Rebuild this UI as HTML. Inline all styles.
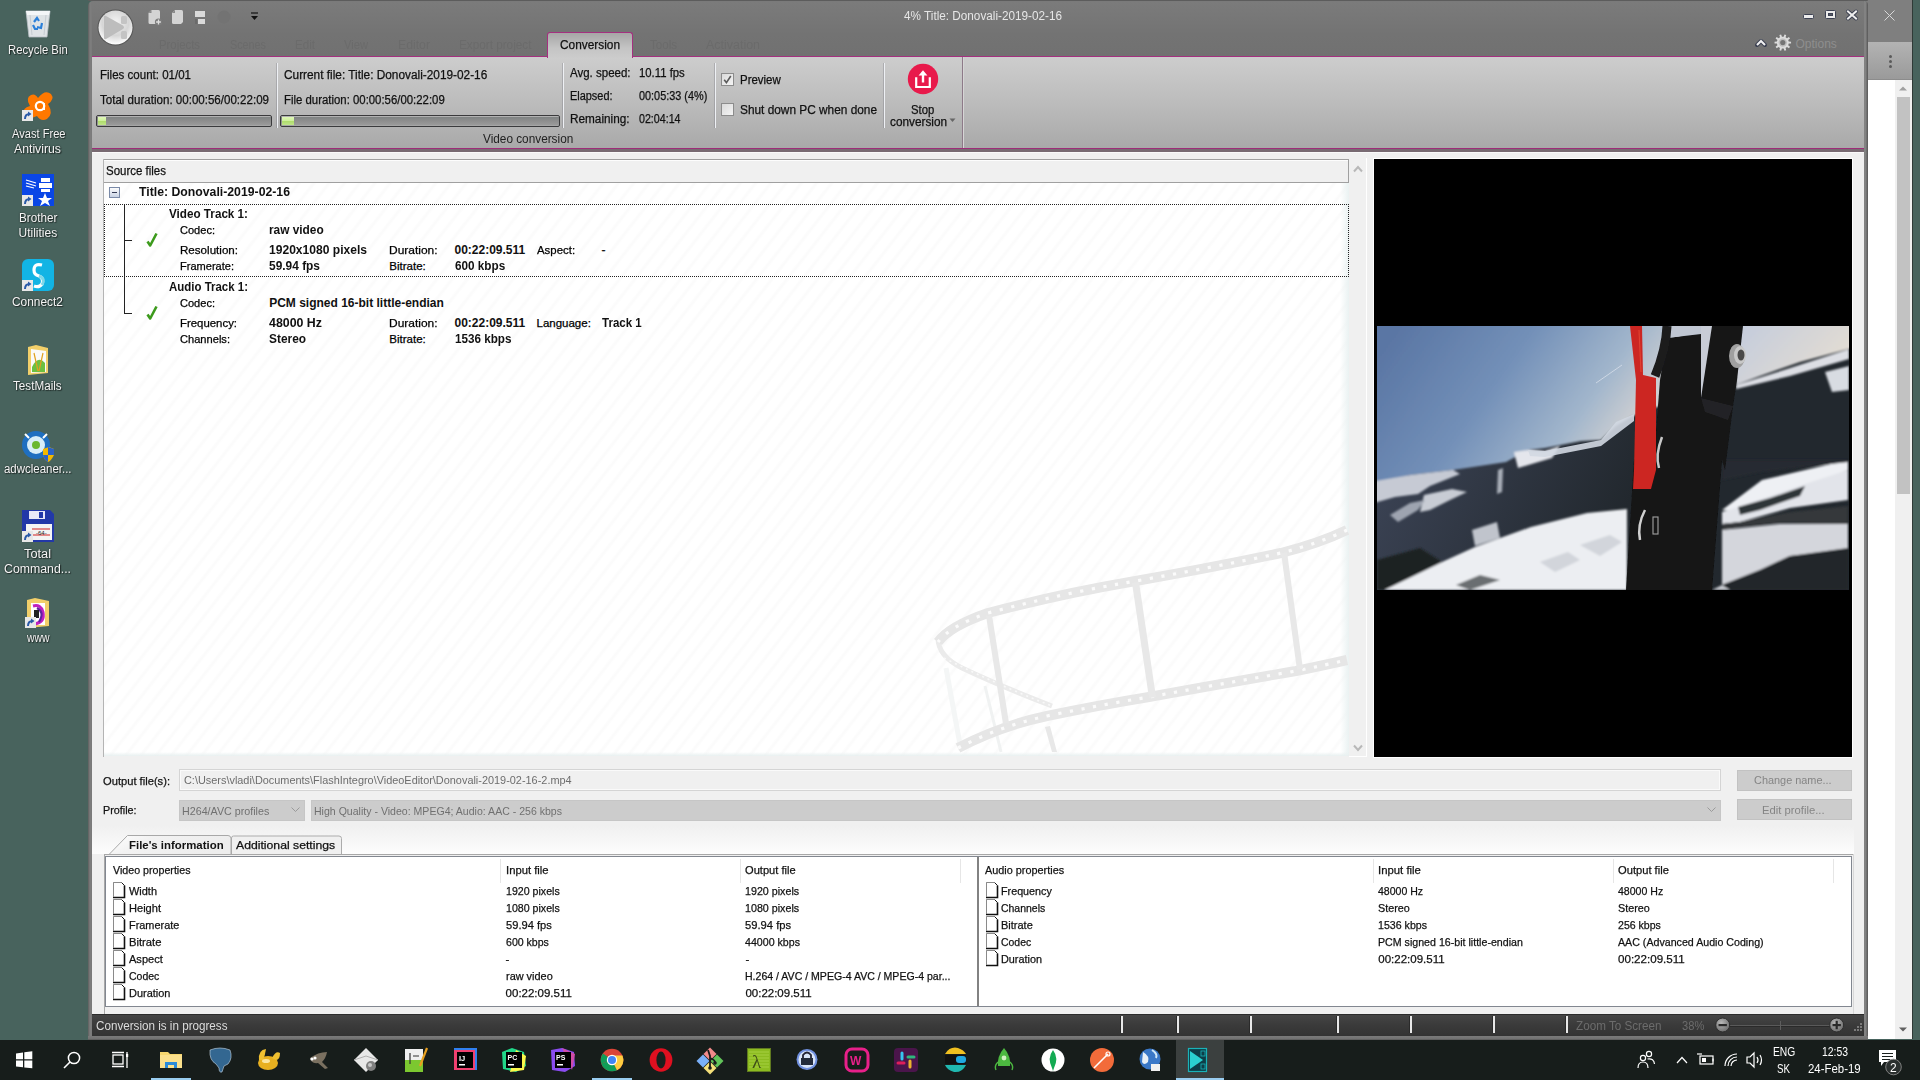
<!DOCTYPE html>
<html><head><meta charset="utf-8">
<style>
*{margin:0;padding:0;box-sizing:border-box}
html,body{width:1920px;height:1080px;overflow:hidden;background:#48635d;font-family:"Liberation Sans",sans-serif;position:relative}
.a{position:absolute}
.t{position:absolute;white-space:nowrap;line-height:1}
.k{-webkit-text-stroke:0.25px currentColor}
svg{position:absolute;overflow:visible}
</style></head><body>
<div class="a" style="left:1866px;top:0px;width:46px;height:1039px;background:#ffffff;"></div>
<div class="a" style="left:1866px;top:0px;width:46px;height:42px;background:#7f7f7f;"></div>
<div class="a" style="left:1866px;top:42px;width:46px;height:37px;background:linear-gradient(#b3b3b3,#9a9a9a);"></div>
<div class="a" style="left:1866px;top:79px;width:46px;height:1px;background:#8c8c8c;"></div>
<div class="a" style="left:1895px;top:80px;width:17px;height:959px;background:#f0f0f0;"></div>
<div class="a" style="left:1897px;top:97px;width:13px;height:397px;background:#c2c2c2;"></div>
<div class="a" style="left:1912px;top:0px;width:1px;height:1039px;background:#2f3a37;"></div>
<svg style="left:1884px;top:10px" width="11" height="11"><path d="M0.5 0.5L10.5 10.5M10.5 0.5L0.5 10.5" stroke="#d8d8d8" stroke-width="1"/></svg>
<div class="a" style="left:1889px;top:55px;width:3px;height:3px;border-radius:50%;background:#5a5a5a"></div>
<div class="a" style="left:1889px;top:60px;width:3px;height:3px;border-radius:50%;background:#5a5a5a"></div>
<div class="a" style="left:1889px;top:65px;width:3px;height:3px;border-radius:50%;background:#5a5a5a"></div>
<svg style="left:1899px;top:86px" width="8" height="5"><path d="M0 4.5L4 0.5L8 4.5Z" fill="#a0a0a0"/></svg>
<svg style="left:1899px;top:1027px" width="8" height="5"><path d="M0 0.5L4 4.5L8 0.5Z" fill="#606060"/></svg>
<div class="a" style="left:88px;top:1px;width:1780px;height:1038px;background:linear-gradient(90deg,#5e5e5e 0,#7e7e7e 2px,#7a7a7a 4px);border-radius:5px 5px 0 0"></div>
<div class="a" style="left:1864px;top:1px;width:4px;height:1038px;background:linear-gradient(90deg,#7a7a7a,#8a8a8a 1px,#6a6a6a 3px,#555 4px);border-radius:0 5px 0 0"></div>
<div class="a" style="left:92px;top:2px;width:1772px;height:54px;background:linear-gradient(#7b7b7b,#737373 60%,#717171);"></div>
<div class="a" style="left:92px;top:56px;width:1772px;height:1px;background:#a4307f;"></div>
<div class="a" style="left:92px;top:57px;width:1772px;height:91px;background:linear-gradient(#cdcdcd,#bcbcbc 50%,#a9a9a9);"></div>
<div class="a" style="left:92px;top:148px;width:1772px;height:1px;background:#9e2d78;"></div>
<div class="a" style="left:92px;top:149px;width:1772px;height:3px;background:#786a72;"></div>
<div class="a" style="left:92px;top:152px;width:1772px;height:862px;background:#f0f0f0;"></div>
<div class="a" style="left:92px;top:152px;width:1772px;height:1px;background:#fafafa;"></div>
<div class="a" style="left:92px;top:1014px;width:1772px;height:1px;background:#2c2c2c;"></div>
<div class="a" style="left:92px;top:1015px;width:1772px;height:21px;background:linear-gradient(#454545,#3a3a3a 50%,#333);"></div>
<div class="a" style="left:88px;top:1036px;width:1780px;height:4px;background:linear-gradient(#7a7a7a,#727272 70%,#555);"></div>
<div class="a" style="left:0px;top:1040px;width:1920px;height:40px;background:#171d1b;"></div>
<div class="a" style="left:88px;top:0px;width:1780px;height:1px;background:#5c5c5c;border-radius:5px 5px 0 0"></div>
<svg style="left:96px;top:8px" width="40" height="40" viewBox="0 0 40 40">
<defs><radialGradient id="orbg" cx="50%" cy="35%" r="65%"><stop offset="0" stop-color="#f4f4f4"/><stop offset="0.6" stop-color="#d6d6d6"/><stop offset="1" stop-color="#ffffff"/></radialGradient></defs>
<circle cx="19.5" cy="19.5" r="18" fill="#555"/>
<circle cx="19.5" cy="19.5" r="17" fill="url(#orbg)"/>
<path d="M8 9 Q8 7 10 8 L27 17.5 Q29 19.5 27 21 L10 31 Q8 32 8 30 Z" fill="#bdbdbd"/>
<rect x="25" y="8" width="6" height="8" rx="1.5" fill="#c4c4c4"/>
<rect x="25" y="23" width="6" height="8" rx="1.5" fill="#c4c4c4"/>
</svg>
<svg style="left:146px;top:8px" width="120" height="20" viewBox="0 0 120 20">
<path d="M5.5 2 H12.5 Q14 2 14 3.5 V15.5 Q14 16 13.5 16 H4 Q2.5 16 2.5 14.5 V5 Z" fill="#d4d4d4"/>
<path d="M5.5 2 V5 H2.5Z" fill="#8a8a8a"/>
<circle cx="12.5" cy="14" r="3.6" fill="#7c7c7c"/><path d="M12.5 11.6V16.4M10.1 14H14.9" stroke="#dedede" stroke-width="1.3"/>
<path d="M29 2 H35.5 Q37 2 37 3.5 V14 L35 16 H27.5 Q26 16 26 14.5 V5 Z" fill="#d4d4d4"/>
<path d="M29 2 V5 H26Z" fill="#8a8a8a"/>
<rect x="49" y="3" width="10" height="6" fill="#dadada"/><rect x="52" y="11" width="7" height="5" fill="#dadada"/><rect x="49" y="11" width="2" height="5" fill="#6a6a6a"/>
<circle cx="78" cy="9" r="6.5" fill="#737373"/>
<path d="M105 5H112" stroke="#111" stroke-width="1.2"/><path d="M105 8H112L108.5 12Z" fill="#111"/>
</svg>
<div class="t" style="left:903.75px;top:10px;font-size:12px;color:#e6e6e6;transform:scaleX(0.9790);transform-origin:0 0;">4% Title: Donovali-2019-02-16</div>
<svg style="left:1802px;top:9px" width="60" height="12" viewBox="0 0 60 12">
<rect x="1.5" y="5.5" width="10" height="4" rx="1" fill="#ececec" stroke="#3c4152" stroke-width="1"/>
<rect x="23.5" y="1.5" width="10" height="8" rx="1" fill="#ececec" stroke="#3c4152" stroke-width="1"/>
<rect x="26.5" y="4.5" width="4" height="2" fill="#555a66" stroke="#3c4152" stroke-width="1"/>
<path d="M46 2.5L54 9.5M54 2.5L46 9.5" stroke="#3c4152" stroke-width="4" stroke-linecap="round"/>
<path d="M46 2.5L54 9.5M54 2.5L46 9.5" stroke="#efefef" stroke-width="2" stroke-linecap="square"/>
</svg>
<svg style="left:1754px;top:37px" width="14" height="12" viewBox="0 0 14 12">
<path d="M3 8L7 4L11 8" stroke="#3c4152" stroke-width="4" fill="none" stroke-linecap="round" stroke-linejoin="round"/>
<path d="M3 8L7 4L11 8" stroke="#f2f2f2" stroke-width="2" fill="none" stroke-linejoin="miter"/>
</svg>
<svg style="left:0;top:0" width="1920" height="60"><polygon points="1788.71,41.58 1791.05,41.69 1791.05,43.51 1788.71,43.62 1788.18,45.25 1790.01,46.71 1788.94,48.19 1786.99,46.90 1785.59,47.91 1786.22,50.16 1784.48,50.73 1783.66,48.54 1781.94,48.54 1781.12,50.73 1779.38,50.16 1780.01,47.91 1778.61,46.90 1776.66,48.19 1775.59,46.71 1777.42,45.25 1776.89,43.62 1774.55,43.51 1774.55,41.69 1776.89,41.58 1777.42,39.95 1775.59,38.49 1776.66,37.01 1778.61,38.30 1780.01,37.29 1779.38,35.04 1781.12,34.47 1781.94,36.66 1783.66,36.66 1784.48,34.47 1786.22,35.04 1785.59,37.29 1786.99,38.30 1788.94,37.01 1790.01,38.49 1788.18,39.95" fill="#dcdcdc"/><circle cx="1782.8" cy="42.6" r="4.2" fill="#bdbdbd"/><circle cx="1782.8" cy="42.6" r="2.6" fill="#747474"/></svg>
<div class="t" style="left:1795.50px;top:38px;font-size:12px;color:#8e8e8e;">Options</div>
<div class="t" style="left:159.00px;top:39px;font-size:12px;color:#6b6b6b;transform:scaleX(0.9458);transform-origin:0 0;">Projects</div>
<div class="t" style="left:230.00px;top:39px;font-size:12px;color:#6b6b6b;transform:scaleX(0.8994);transform-origin:0 0;">Scenes</div>
<div class="t" style="left:295.00px;top:39px;font-size:12px;color:#6b6b6b;transform:scaleX(0.9672);transform-origin:0 0;">Edit</div>
<div class="t" style="left:344.00px;top:39px;font-size:12px;color:#6b6b6b;transform:scaleX(0.9305);transform-origin:0 0;">View</div>
<div class="t" style="left:398.00px;top:39px;font-size:12px;color:#6b6b6b;transform:scaleX(1.0208);transform-origin:0 0;">Editor</div>
<div class="t" style="left:458.60px;top:39px;font-size:12px;color:#6b6b6b;transform:scaleX(0.9779);transform-origin:0 0;">Export project</div>
<div class="t" style="left:650.00px;top:39px;font-size:12px;color:#6b6b6b;transform:scaleX(0.9638);transform-origin:0 0;">Tools</div>
<div class="t" style="left:706.00px;top:39px;font-size:12px;color:#6b6b6b;transform:scaleX(1.0380);transform-origin:0 0;">Activation</div>
<div class="a" style="left:547px;top:32px;width:86px;height:26px;background:linear-gradient(#a6a6a6,#c4c4c4 60%,#cccccc);border:1px solid #a4307f;border-bottom:none;border-radius:3px 3px 0 0"></div>
<div class="t k" style="left:560.00px;top:39px;font-size:12px;color:#111;transform:scaleX(0.9885);transform-origin:0 0;">Conversion</div>
<div class="a" style="left:96px;top:115px;width:176px;height:12px;border:1px solid #3a3a3c;border-radius:2px;background:linear-gradient(#b2b2b2 0,#b2b2b2 1px,#7f8383 1px,#8e8e8e 5px,#9a9a9a 9px,#b0b0b0 10px)"></div>
<div class="a" style="left:98px;top:117px;width:8px;height:8px;background:linear-gradient(#e0f8b8 0,#cdf09a 50%,#aedc6a 50%,#c0e48a 100%)"></div>
<div class="a" style="left:280px;top:115px;width:280px;height:12px;border:1px solid #3a3a3c;border-radius:2px;background:linear-gradient(#b2b2b2 0,#b2b2b2 1px,#7f8383 1px,#8e8e8e 5px,#9a9a9a 9px,#b0b0b0 10px)"></div>
<div class="a" style="left:282px;top:117px;width:12px;height:8px;background:linear-gradient(#e0f8b8 0,#cdf09a 50%,#aedc6a 50%,#c0e48a 100%)"></div>
<div class="a" style="left:276px;top:63px;width:1px;height:65px;background:rgba(120,120,130,0.35);"></div>
<div class="a" style="left:277px;top:63px;width:1px;height:65px;background:#eef0f4;"></div>
<div class="a" style="left:562px;top:63px;width:1px;height:65px;background:rgba(120,120,130,0.35);"></div>
<div class="a" style="left:563px;top:63px;width:1px;height:65px;background:#eef0f4;"></div>
<div class="a" style="left:714px;top:63px;width:1px;height:65px;background:rgba(120,120,130,0.35);"></div>
<div class="a" style="left:715px;top:63px;width:1px;height:65px;background:#eef0f4;"></div>
<div class="a" style="left:883px;top:63px;width:1px;height:65px;background:rgba(120,120,130,0.35);"></div>
<div class="a" style="left:884px;top:63px;width:1px;height:65px;background:#eef0f4;"></div>
<div class="a" style="left:962px;top:57px;width:1px;height:91px;background:#8d7a88;"></div>
<div class="a" style="left:963px;top:57px;width:1px;height:91px;background:#d6d6d6;"></div>
<div class="t k" style="left:100.00px;top:69px;font-size:12px;color:#111;transform:scaleX(0.9607);transform-origin:0 0;">Files count: 01/01</div>
<div class="t k" style="left:100.00px;top:94px;font-size:12px;color:#111;transform:scaleX(0.9631);transform-origin:0 0;">Total duration: 00:00:56/00:22:09</div>
<div class="t k" style="left:284.25px;top:69px;font-size:12px;color:#111;transform:scaleX(0.9863);transform-origin:0 0;">Current file: Title: Donovali-2019-02-16</div>
<div class="t k" style="left:284.25px;top:94px;font-size:12px;color:#111;transform:scaleX(0.9486);transform-origin:0 0;">File duration: 00:00:56/00:22:09</div>
<div class="t k" style="left:570.00px;top:67px;font-size:12px;color:#111;transform:scaleX(0.9579);transform-origin:0 0;">Avg. speed:</div>
<div class="t k" style="left:639.25px;top:67px;font-size:12px;color:#111;transform:scaleX(0.9437);transform-origin:0 0;">10.11 fps</div>
<div class="t k" style="left:570.00px;top:90px;font-size:12px;color:#111;transform:scaleX(0.9101);transform-origin:0 0;">Elapsed:</div>
<div class="t k" style="left:639.25px;top:90px;font-size:12px;color:#111;transform:scaleX(0.9054);transform-origin:0 0;">00:05:33 (4%)</div>
<div class="t k" style="left:570.00px;top:113px;font-size:12px;color:#111;transform:scaleX(0.9803);transform-origin:0 0;">Remaining:</div>
<div class="t k" style="left:639.25px;top:113px;font-size:12px;color:#111;transform:scaleX(0.8884);transform-origin:0 0;">02:04:14</div>
<div class="t" style="left:483.00px;top:133px;font-size:12px;color:#222;transform:scaleX(0.9827);transform-origin:0 0;">Video conversion</div>
<div class="a" style="left:721px;top:73px;width:13px;height:13px;border:1px solid #8c8c8c;background:linear-gradient(135deg,#dadada,#f4f4f4)"></div>
<svg style="left:721px;top:73px" width="13" height="13"><path d="M3.2 6.8L5.4 9.6L9.8 3" stroke="#5a5a5a" stroke-width="1.6" fill="none"/></svg>
<div class="a" style="left:721px;top:103px;width:13px;height:13px;border:1px solid #8c8c8c;background:linear-gradient(135deg,#dadada,#f4f4f4)"></div>
<div class="t k" style="left:740.00px;top:74px;font-size:12px;color:#111;transform:scaleX(0.9548);transform-origin:0 0;">Preview</div>
<div class="t k" style="left:740.00px;top:104px;font-size:12px;color:#111;transform:scaleX(0.9873);transform-origin:0 0;">Shut down PC when done</div>
<svg style="left:907px;top:63px" width="32" height="32" viewBox="0 0 32 32">
<circle cx="16" cy="16" r="15.2" fill="#e81a4b"/>
<path d="M9.2 14.2V24H22.8V14.2" stroke="#fff" stroke-width="2.2" fill="none"/>
<path d="M16 19.5V9" stroke="#fff" stroke-width="2.4"/>
<path d="M11.6 12.4L16 7.2L20.4 12.4Z" fill="#fff"/>
</svg>
<div class="t k" style="left:911.25px;top:104px;font-size:12px;color:#111;transform:scaleX(0.9418);transform-origin:0 0;">Stop</div>
<div class="t k" style="left:889.50px;top:116px;font-size:12px;color:#111;transform:scaleX(0.9822);transform-origin:0 0;">conversion</div>
<svg style="left:949px;top:118px" width="7" height="5"><path d="M0.5 0.5H6.5L3.5 4Z" fill="#666"/></svg>
<div class="a" style="left:103px;top:159px;width:1246px;height:1px;background:#a0a0a0;"></div>
<div class="a" style="left:103px;top:159px;width:1px;height:598px;background:#b4b4b4;"></div>
<div class="a" style="left:104px;top:160px;width:1245px;height:22px;background:#f0f0f0;"></div>
<div class="a" style="left:104px;top:160px;width:1245px;height:1px;background:#fdfdfd;"></div>
<div class="a" style="left:1348px;top:160px;width:1px;height:23px;background:#a0a0a0;"></div>
<div class="a" style="left:104px;top:182px;width:1245px;height:1px;background:#a0a0a0;"></div>
<div class="a" style="left:104px;top:183px;width:1245px;height:573px;background:linear-gradient(90deg,rgba(255,255,255,0) 0,rgba(255,255,255,0) 1236px,#eaf2f2 1245px),repeating-linear-gradient(128deg,#fff 0,#fff 7px,#fbfbfb 9px,#fbfbfb 10px,#fff 12px)"></div>
<div class="a" style="left:104px;top:752px;width:1245px;height:4px;background:linear-gradient(rgba(238,244,244,0),#e8f0f0);"></div>
<div class="a" style="left:1349px;top:159px;width:17px;height:597px;background:#f0f0f0;"></div>
<div class="a" style="left:1366px;top:158px;width:1px;height:599px;background:#ffffff;"></div>
<div class="a" style="left:1349px;top:756px;width:18px;height:1px;background:#ffffff;"></div>
<svg style="left:1353px;top:165px" width="10" height="8"><path d="M1 6.5L5 2L9 6.5" stroke="#b8b8b8" stroke-width="2" fill="none"/></svg>
<svg style="left:1353px;top:744px" width="10" height="8"><path d="M1 1.5L5 6L9 1.5" stroke="#b8b8b8" stroke-width="2" fill="none"/></svg>
<div class="t k" style="left:106.00px;top:165px;font-size:12px;color:#111;transform:scaleX(0.9570);transform-origin:0 0;">Source files</div>
<svg style="left:0;top:0" width="1920" height="1080">
<g fill="none" stroke-linecap="butt">
<path d="M946 668 L961 750" stroke="#f4f6f6" stroke-width="5"/>
<path d="M985 686 L1001 752" stroke="#f0f2f2" stroke-width="3"/>
<path d="M938 638 Q938 656 962 668 Q1000 686 1052 706" stroke="#ebebeb" stroke-width="5"/>
<path d="M944 658 Q1000 686 1052 706" stroke="#f8f8f8" stroke-width="1.6" stroke-dasharray="2 4"/>
<path d="M1347 530 Q1320 543 1281 553 Q1210 568 1130 582 Q1060 594 988 613 Q950 626 938 642" stroke="#e6e6e6" stroke-width="10"/>
<path d="M1347 530 Q1320 543 1281 553 Q1210 568 1130 582 Q1060 594 988 613 Q950 626 938 642" stroke="#fbfbfb" stroke-width="3.2" stroke-dasharray="3.2 8.6"/>
<path d="M958 748 Q1000 726 1047 716 Q1100 705 1149 697 Q1220 684 1296 671 Q1325 665 1347 660" stroke="#e6e6e6" stroke-width="10"/>
<path d="M958 748 Q1000 726 1047 716 Q1100 705 1149 697 Q1220 684 1296 671 Q1325 665 1347 660" stroke="#fbfbfb" stroke-width="3.2" stroke-dasharray="3.2 8.6"/>
</g>
<g fill="#e8e8e8">
<polygon points="986,616 992,615 1009,723 1003,724"/>
<polygon points="1132,583 1139,582 1156,697 1149,698"/>
<polygon points="1281,553 1287,552 1303,669 1297,670"/>
<polygon points="1045,727 1050,726 1057,752 1052,752"/>
</g>
</svg>
<div class="a" style="left:109px;top:187px;width:11px;height:11px;border:1px solid #7a8aa8;background:linear-gradient(#fdfdfd,#c8d2e4)"></div>
<div class="a" style="left:112px;top:192px;width:5px;height:1px;background:#333a55;"></div>
<div class="t" style="left:139.40px;top:186px;font-size:12px;font-weight:700;color:#111;transform:scaleX(1.0214);transform-origin:0 0;">Title: Donovali-2019-02-16</div>
<div class="a" style="left:104px;top:204px;width:1245px;height:73px;border:1px dotted #222;border-right:1px dotted #222"></div>
<div class="a" style="left:124px;top:205px;width:1px;height:109px;background:#222;"></div>
<div class="a" style="left:124px;top:240px;width:8px;height:1px;background:#222;"></div>
<div class="a" style="left:124px;top:313px;width:8px;height:1px;background:#222;"></div>
<svg style="left:146px;top:232px" width="12" height="16"><path d="M1.5 9.5L4.2 13.5L10.5 1.5" stroke="#3c9a1c" stroke-width="2.6" fill="none" stroke-linejoin="round"/></svg>
<svg style="left:146px;top:305px" width="12" height="16"><path d="M1.5 9.5L4.2 13.5L10.5 1.5" stroke="#3c9a1c" stroke-width="2.6" fill="none" stroke-linejoin="round"/></svg>
<div class="t" style="left:169.30px;top:208px;font-size:12px;font-weight:700;color:#111;transform:scaleX(0.9735);transform-origin:0 0;">Video Track 1:</div>
<div class="t k" style="left:179.50px;top:225px;font-size:11.5px;color:#000;transform:scaleX(0.9606);transform-origin:0 0;">Codec:</div>
<div class="t" style="left:269.20px;top:224px;font-size:12px;font-weight:700;color:#111;transform:scaleX(0.9882);transform-origin:0 0;">raw video</div>
<div class="t k" style="left:179.50px;top:245px;font-size:11.5px;color:#000;transform:scaleX(1.0081);transform-origin:0 0;">Resolution:</div>
<div class="t" style="left:269.20px;top:244px;font-size:12px;font-weight:700;color:#111;transform:scaleX(1.0060);transform-origin:0 0;">1920x1080 pixels</div>
<div class="t k" style="left:389.30px;top:245px;font-size:11.5px;color:#000;transform:scaleX(1.0415);transform-origin:0 0;">Duration:</div>
<div class="t" style="left:454.50px;top:244px;font-size:12px;font-weight:700;color:#111;">00:22:09.511</div>
<div class="t k" style="left:536.50px;top:245px;font-size:11.5px;color:#000;transform:scaleX(0.9934);transform-origin:0 0;">Aspect:</div>
<div class="t k" style="left:601.60px;top:244px;font-size:12px;color:#111;">-</div>
<div class="t k" style="left:179.50px;top:261px;font-size:11.5px;color:#000;transform:scaleX(0.9602);transform-origin:0 0;">Framerate:</div>
<div class="t" style="left:269.20px;top:260px;font-size:12px;font-weight:700;color:#111;transform:scaleX(0.9929);transform-origin:0 0;">59.94 fps</div>
<div class="t k" style="left:389.30px;top:261px;font-size:11.5px;color:#000;">Bitrate:</div>
<div class="t" style="left:454.50px;top:260px;font-size:12px;font-weight:700;color:#111;transform:scaleX(0.9774);transform-origin:0 0;">600 kbps</div>
<div class="t" style="left:169.30px;top:281px;font-size:12px;font-weight:700;color:#111;transform:scaleX(0.9554);transform-origin:0 0;">Audio Track 1:</div>
<div class="t k" style="left:179.50px;top:298px;font-size:11.5px;color:#000;transform:scaleX(0.9606);transform-origin:0 0;">Codec:</div>
<div class="t" style="left:269.20px;top:297px;font-size:12px;font-weight:700;color:#111;">PCM signed 16-bit little-endian</div>
<div class="t k" style="left:179.50px;top:318px;font-size:11.5px;color:#000;transform:scaleX(0.9908);transform-origin:0 0;">Frequency:</div>
<div class="t" style="left:269.20px;top:317px;font-size:12px;font-weight:700;color:#111;transform:scaleX(1.0317);transform-origin:0 0;">48000 Hz</div>
<div class="t k" style="left:389.30px;top:318px;font-size:11.5px;color:#000;transform:scaleX(1.0415);transform-origin:0 0;">Duration:</div>
<div class="t" style="left:454.50px;top:317px;font-size:12px;font-weight:700;color:#111;">00:22:09.511</div>
<div class="t k" style="left:536.50px;top:318px;font-size:11.5px;color:#000;">Language:</div>
<div class="t" style="left:601.60px;top:317px;font-size:12px;font-weight:700;color:#111;transform:scaleX(0.9597);transform-origin:0 0;">Track 1</div>
<div class="t k" style="left:179.50px;top:334px;font-size:11.5px;color:#000;transform:scaleX(0.9656);transform-origin:0 0;">Channels:</div>
<div class="t" style="left:269.20px;top:333px;font-size:12px;font-weight:700;color:#111;transform:scaleX(0.9907);transform-origin:0 0;">Stereo</div>
<div class="t k" style="left:389.30px;top:334px;font-size:11.5px;color:#000;">Bitrate:</div>
<div class="t" style="left:454.50px;top:333px;font-size:12px;font-weight:700;color:#111;transform:scaleX(0.9735);transform-origin:0 0;">1536 kbps</div>
<div class="a" style="left:1373px;top:158px;width:480px;height:600px;background:#ffffff;"></div>
<div class="a" style="left:1374px;top:159px;width:478px;height:598px;background:#000000;"></div>
<svg style="left:1377px;top:326px;overflow:hidden" width="472" height="264" viewBox="1377 326 472 264">
<defs>
<linearGradient id="sky" gradientUnits="userSpaceOnUse" x1="1400" y1="326" x2="1600" y2="470"><stop offset="0" stop-color="#5a76a4"/><stop offset="0.45" stop-color="#7390b8"/><stop offset="0.8" stop-color="#a2b6cc"/><stop offset="1" stop-color="#cfd0d2"/></linearGradient>
<linearGradient id="skyr" gradientUnits="userSpaceOnUse" x1="1740" y1="326" x2="1820" y2="400"><stop offset="0" stop-color="#c4ccdc"/><stop offset="1" stop-color="#e6ded2"/></linearGradient>
<linearGradient id="skym" gradientUnits="userSpaceOnUse" x1="1560" y1="360" x2="1660" y2="430"><stop offset="0" stop-color="#a9bad0"/><stop offset="1" stop-color="#d8d2cc"/></linearGradient>
<linearGradient id="mtn" gradientUnits="userSpaceOnUse" x1="1377" y1="450" x2="1600" y2="560"><stop offset="0" stop-color="#3c4456"/><stop offset="1" stop-color="#22282e"/></linearGradient>
<filter id="bl" x="-5%" y="-5%" width="110%" height="110%"><feGaussianBlur stdDeviation="0.6"/></filter>
<filter id="bl2" x="-5%" y="-5%" width="110%" height="110%"><feGaussianBlur stdDeviation="1.3"/></filter>
</defs>
<rect x="1377" y="326" width="472" height="264" fill="url(#mtn)"/>
<g filter="url(#bl2)">
<polygon points="1370,318 1680,318 1680,398 1660,406 1631,417 1616,426 1601,440 1581,441 1545,448 1528,450 1506,462 1453,470 1411,475 1370,484" fill="url(#sky)"/>
<polygon points="1735,318 1856,318 1856,347 1800,362 1760,376 1736,385" fill="url(#skyr)"/>
<polygon points="1736,385 1790,368 1849,349 1849,359 1790,376 1736,389" fill="#dcdee4"/>
<polygon points="1370,482 1411,475 1453,470 1460,474 1430,486 1418,494 1395,497 1370,504" fill="#c6cad4"/>
<polygon points="1424,495 1452,489 1467,492 1450,500 1430,510 1420,512" fill="#c8ccd4"/>
<polygon points="1390,515 1410,503 1425,500 1418,510 1398,522" fill="#9ea4b0"/>
<polygon points="1514,452 1528,450 1545,451 1560,446 1552,458 1535,463 1518,468" fill="#e4e6ec"/>
<polygon points="1498,470 1503,468 1502,492 1497,494" fill="#a8aeb8"/>
<polygon points="1825,372 1849,366 1849,390 1832,392" fill="#d8dce2"/>
<polygon points="1384,590 1442,562 1475,547 1531,527 1587,513 1627,509 1627,590" fill="#eceef2"/>
<polygon points="1472,530 1497,522 1500,538 1475,546" fill="#c0c4cc"/>
<polygon points="1377,590 1377,560 1420,548 1442,562 1384,590" fill="#1e2422"/>
<polygon points="1456,585 1480,575 1500,580 1470,590" fill="#4a4e50" opacity="0.8"/>
<polygon points="1580,545 1610,535 1622,542 1600,556" fill="#b8bcc4" opacity="0.5"/>
<polygon points="1540,562 1568,552 1580,560 1555,572" fill="#b8bcc4" opacity="0.5"/>
<polygon points="1722,510 1762,480 1848,460 1848,470 1800,490 1770,500 1738,512" fill="#eef0f4"/>
<polygon points="1722,460 1848,460 1848,462 1762,472 1722,480" fill="#262c30"/>
<polygon points="1722,512 1738,507 1805,484 1848,470 1848,500 1790,508 1740,522 1722,524" fill="#e2e4ea"/>
<polygon points="1738,507 1770,498 1805,486 1800,496 1760,510 1740,515" fill="#2e3438"/>
<polygon points="1722,524 1740,522 1790,512 1848,506 1848,524 1780,523 1740,527 1722,530" fill="#34383a"/>
<polygon points="1722,530 1780,524 1848,524 1848,552 1790,556 1760,570 1722,585" fill="#d4d6dc"/>
<polygon points="1722,585 1760,570 1790,556 1848,548 1848,590 1722,590" fill="#23282a"/>
<polygon points="1712,590 1722,585 1730,590" fill="#c8cad0"/>
</g>
<g filter="url(#bl)">
<polygon points="1528,450 1545,451 1601,440 1616,422 1634,414 1634,421 1601,446 1545,457 1530,456" fill="#d2d8e2" opacity="0.9"/>
<polygon points="1634,460 1656,432 1660,380 1667,338 1701,334 1712,326 1743,326 1737,380 1733,406 1725,470 1722,460 1712,590 1626,590" fill="#141414"/>
<polygon points="1701,326 1712,326 1701,398" fill="#c8ccd6"/>
<polygon points="1673,326 1701,326 1701,334 1667,338" fill="#c0c6d2"/>
<path d="M1667 326 Q1666 350 1655 376" stroke="#1a1a1c" stroke-width="9" fill="none"/>
<polygon points="1701,398 1733,406 1728,420 1705,412" fill="#242426"/>
<polygon points="1630,326 1642,326 1643,375 1656,378 1656,470 1651,489 1633,489 1634,470 1636,380" fill="#cc2620"/>
<path d="M1639 330 L1641 372" stroke="#e04030" stroke-width="1.2"/>
<ellipse cx="1737" cy="356" rx="8" ry="12" fill="#a0a0a0"/><ellipse cx="1740" cy="355" rx="6" ry="9" fill="#c8c8c8"/><ellipse cx="1741" cy="355" rx="3.5" ry="5.5" fill="#4a4a4a"/>
<path d="M1662 437 Q1655 455 1659 468" stroke="#c8c8c8" stroke-width="2.5" fill="none"/>
<path d="M1645 510 Q1637 525 1640 540" stroke="#d0d0d0" stroke-width="2.5" fill="none"/>
<rect x="1653" y="517" width="5" height="17" fill="none" stroke="#9a9a9a" stroke-width="1.2"/>
</g>
<path d="M1596 383 L1622 365" stroke="#d8e0ea" stroke-width="0.8"/>
</svg>
<div class="a" style="left:92px;top:826px;width:1762px;height:28px;background:linear-gradient(#f0f0f0,#fdfdfd);"></div>
<div class="t k" style="left:102.50px;top:776px;font-size:11.5px;color:#111;transform:scaleX(0.9707);transform-origin:0 0;">Output file(s):</div>
<div class="a" style="left:179px;top:769px;width:1542px;height:22px;background:#f0f0f0;border:1px solid #d4d4d4;box-shadow:inset 0 0 0 1px #fafafa"></div>
<div class="t" style="left:184.40px;top:775px;font-size:11.5px;color:#6d6d6d;transform:scaleX(0.9480);transform-origin:0 0;">C:\Users\vladi\Documents\FlashIntegro\VideoEditor\Donovali-2019-02-16-2.mp4</div>
<div class="a" style="left:1737px;top:770px;width:115px;height:21px;background:#cccccc;border:1px solid #c2c2c2"></div>
<div class="t" style="left:1754.20px;top:775px;font-size:11.5px;color:#858585;transform:scaleX(0.9483);transform-origin:0 0;">Change name...</div>
<div class="t k" style="left:102.50px;top:805px;font-size:11.5px;color:#111;transform:scaleX(0.9360);transform-origin:0 0;">Profile:</div>
<div class="a" style="left:179px;top:800px;width:126px;height:21px;background:#cccccc;border:1px solid #c6c6c6"></div>
<div class="t" style="left:182.20px;top:806px;font-size:11.5px;color:#707070;transform:scaleX(0.9312);transform-origin:0 0;">H264/AVC profiles</div>
<svg style="left:291px;top:807px" width="9" height="6"><path d="M0.5 0.5L4.5 4.5L8.5 0.5" stroke="#9a9a9a" fill="none"/></svg>
<div class="a" style="left:311px;top:800px;width:1410px;height:21px;background:#cccccc;border:1px solid #c6c6c6"></div>
<div class="t" style="left:314.30px;top:806px;font-size:11.5px;color:#707070;transform:scaleX(0.9180);transform-origin:0 0;">High Quality - Video: MPEG4; Audio: AAC - 256 kbps</div>
<svg style="left:1707px;top:807px" width="9" height="6"><path d="M0.5 0.5L4.5 4.5L8.5 0.5" stroke="#9a9a9a" fill="none"/></svg>
<div class="a" style="left:1737px;top:799px;width:115px;height:21px;background:#cccccc;border:1px solid #c2c2c2"></div>
<div class="t" style="left:1762.20px;top:805px;font-size:11.5px;color:#858585;transform:scaleX(0.9794);transform-origin:0 0;">Edit profile...</div>
<svg style="left:0;top:0" width="1920" height="1080">
<defs><linearGradient id="tabg" x1="0" y1="0" x2="1" y2="0.3"><stop offset="0" stop-color="#ffffff"/><stop offset="0.35" stop-color="#f2f2f2"/><stop offset="1" stop-color="#ededed"/></linearGradient></defs>
<path d="M231.5 855 V838 Q231.5 836 233.5 836 H339 Q341.5 836 341.5 838.5 V855" fill="#f0f0f0" stroke="#acacac"/>
<path d="M108.5 855 L127.5 835.5 H228 Q230.5 835.5 231 838 V855" fill="url(#tabg)" stroke="#a8a8a8"/>
</svg>
<div class="t" style="left:129.30px;top:840px;font-size:11.5px;font-weight:700;color:#111;transform:scaleX(0.9918);transform-origin:0 0;">File's information</div>
<div class="t k" style="left:236.20px;top:839.5px;font-size:11.5px;color:#111;transform:scaleX(1.0618);transform-origin:0 0;">Additional settings</div>
<div class="a" style="left:104px;top:854px;width:1750px;height:160px;background:transparent;border-top:1px solid #a8a8a8;border-left:1px solid #a8a8a8"></div>
<div class="a" style="left:105px;top:856px;width:1747px;height:151px;background:#ffffff;border:1px solid #828790"></div>
<div class="a" style="left:977px;top:857px;width:2px;height:149px;background:#828282;"></div>
<div class="a" style="left:1853px;top:854px;width:1px;height:160px;background:#d8d8d8;"></div>
<div class="a" style="left:500px;top:859px;width:1px;height:24px;background:#e6e6e6;"></div>
<div class="a" style="left:740px;top:859px;width:1px;height:24px;background:#e6e6e6;"></div>
<div class="a" style="left:960px;top:859px;width:1px;height:24px;background:#e6e6e6;"></div>
<div class="a" style="left:1373px;top:859px;width:1px;height:24px;background:#e6e6e6;"></div>
<div class="a" style="left:1613px;top:859px;width:1px;height:24px;background:#e6e6e6;"></div>
<div class="a" style="left:1833px;top:859px;width:1px;height:24px;background:#e6e6e6;"></div>
<div class="t k" style="left:113.10px;top:865px;font-size:11.5px;color:#111;transform:scaleX(0.9277);transform-origin:0 0;">Video properties</div>
<div class="t k" style="left:505.60px;top:865px;font-size:11.5px;color:#111;transform:scaleX(0.9799);transform-origin:0 0;">Input file</div>
<div class="t k" style="left:745.40px;top:865px;font-size:11.5px;color:#111;transform:scaleX(0.9653);transform-origin:0 0;">Output file</div>
<svg style="left:112px;top:882px" width="14" height="17" viewBox="0 0 14 17"><path d="M1.5 15.5V0.5H9.5L12.5 3.5" fill="#fff" stroke="#9a9a9a"/><rect x="1.5" y="1" width="10.5" height="14" fill="#fff"/><path d="M12.5 3.5V15.5H1" stroke="#111" stroke-width="1.6" fill="none"/><path d="M9.5 0.5L12.5 3.5" stroke="#111" fill="none"/><path d="M1.5 0.5V15" stroke="#8a8a8a" fill="none"/><path d="M1.5 0.5H9.5" stroke="#8a8a8a" fill="none"/></svg>
<div class="t k" style="left:128.80px;top:886px;font-size:11.5px;color:#111;transform:scaleX(0.9525);transform-origin:0 0;">Width</div>
<div class="t k" style="left:505.60px;top:886px;font-size:11.5px;color:#111;transform:scaleX(0.9230);transform-origin:0 0;">1920 pixels</div>
<div class="t k" style="left:745.40px;top:886px;font-size:11.5px;color:#111;transform:scaleX(0.9299);transform-origin:0 0;">1920 pixels</div>
<svg style="left:112px;top:899px" width="14" height="17" viewBox="0 0 14 17"><path d="M1.5 15.5V0.5H9.5L12.5 3.5" fill="#fff" stroke="#9a9a9a"/><rect x="1.5" y="1" width="10.5" height="14" fill="#fff"/><path d="M12.5 3.5V15.5H1" stroke="#111" stroke-width="1.6" fill="none"/><path d="M9.5 0.5L12.5 3.5" stroke="#111" fill="none"/><path d="M1.5 0.5V15" stroke="#8a8a8a" fill="none"/><path d="M1.5 0.5H9.5" stroke="#8a8a8a" fill="none"/></svg>
<div class="t k" style="left:128.80px;top:903px;font-size:11.5px;color:#111;transform:scaleX(0.9626);transform-origin:0 0;">Height</div>
<div class="t k" style="left:505.60px;top:903px;font-size:11.5px;color:#111;transform:scaleX(0.9230);transform-origin:0 0;">1080 pixels</div>
<div class="t k" style="left:745.40px;top:903px;font-size:11.5px;color:#111;transform:scaleX(0.9299);transform-origin:0 0;">1080 pixels</div>
<svg style="left:112px;top:916px" width="14" height="17" viewBox="0 0 14 17"><path d="M1.5 15.5V0.5H9.5L12.5 3.5" fill="#fff" stroke="#9a9a9a"/><rect x="1.5" y="1" width="10.5" height="14" fill="#fff"/><path d="M12.5 3.5V15.5H1" stroke="#111" stroke-width="1.6" fill="none"/><path d="M9.5 0.5L12.5 3.5" stroke="#111" fill="none"/><path d="M1.5 0.5V15" stroke="#8a8a8a" fill="none"/><path d="M1.5 0.5H9.5" stroke="#8a8a8a" fill="none"/></svg>
<div class="t k" style="left:128.80px;top:920px;font-size:11.5px;color:#111;transform:scaleX(0.9483);transform-origin:0 0;">Framerate</div>
<div class="t k" style="left:505.60px;top:920px;font-size:11.5px;color:#111;transform:scaleX(0.9680);transform-origin:0 0;">59.94 fps</div>
<div class="t k" style="left:745.40px;top:920px;font-size:11.5px;color:#111;transform:scaleX(0.9743);transform-origin:0 0;">59.94 fps</div>
<svg style="left:112px;top:933px" width="14" height="17" viewBox="0 0 14 17"><path d="M1.5 15.5V0.5H9.5L12.5 3.5" fill="#fff" stroke="#9a9a9a"/><rect x="1.5" y="1" width="10.5" height="14" fill="#fff"/><path d="M12.5 3.5V15.5H1" stroke="#111" stroke-width="1.6" fill="none"/><path d="M9.5 0.5L12.5 3.5" stroke="#111" fill="none"/><path d="M1.5 0.5V15" stroke="#8a8a8a" fill="none"/><path d="M1.5 0.5H9.5" stroke="#8a8a8a" fill="none"/></svg>
<div class="t k" style="left:128.80px;top:937px;font-size:11.5px;color:#111;transform:scaleX(0.9778);transform-origin:0 0;">Bitrate</div>
<div class="t k" style="left:505.60px;top:937px;font-size:11.5px;color:#111;transform:scaleX(0.9191);transform-origin:0 0;">600 kbps</div>
<div class="t k" style="left:745.40px;top:937px;font-size:11.5px;color:#111;transform:scaleX(0.9249);transform-origin:0 0;">44000 kbps</div>
<svg style="left:112px;top:950px" width="14" height="17" viewBox="0 0 14 17"><path d="M1.5 15.5V0.5H9.5L12.5 3.5" fill="#fff" stroke="#9a9a9a"/><rect x="1.5" y="1" width="10.5" height="14" fill="#fff"/><path d="M12.5 3.5V15.5H1" stroke="#111" stroke-width="1.6" fill="none"/><path d="M9.5 0.5L12.5 3.5" stroke="#111" fill="none"/><path d="M1.5 0.5V15" stroke="#8a8a8a" fill="none"/><path d="M1.5 0.5H9.5" stroke="#8a8a8a" fill="none"/></svg>
<div class="t k" style="left:128.80px;top:954px;font-size:11.5px;color:#111;transform:scaleX(0.9614);transform-origin:0 0;">Aspect</div>
<div class="t k" style="left:505.60px;top:954px;font-size:11.5px;color:#111;">-</div>
<div class="t k" style="left:745.40px;top:954px;font-size:11.5px;color:#111;">-</div>
<svg style="left:112px;top:967px" width="14" height="17" viewBox="0 0 14 17"><path d="M1.5 15.5V0.5H9.5L12.5 3.5" fill="#fff" stroke="#9a9a9a"/><rect x="1.5" y="1" width="10.5" height="14" fill="#fff"/><path d="M12.5 3.5V15.5H1" stroke="#111" stroke-width="1.6" fill="none"/><path d="M9.5 0.5L12.5 3.5" stroke="#111" fill="none"/><path d="M1.5 0.5V15" stroke="#8a8a8a" fill="none"/><path d="M1.5 0.5H9.5" stroke="#8a8a8a" fill="none"/></svg>
<div class="t k" style="left:128.80px;top:971px;font-size:11.5px;color:#111;transform:scaleX(0.9115);transform-origin:0 0;">Codec</div>
<div class="t k" style="left:505.60px;top:971px;font-size:11.5px;color:#111;transform:scaleX(0.9488);transform-origin:0 0;">raw video</div>
<div class="t k" style="left:745.40px;top:971px;font-size:11.5px;color:#111;transform:scaleX(0.9175);transform-origin:0 0;">H.264 / AVC / MPEG-4 AVC / MPEG-4 par...</div>
<svg style="left:112px;top:984px" width="14" height="17" viewBox="0 0 14 17"><path d="M1.5 15.5V0.5H9.5L12.5 3.5" fill="#fff" stroke="#9a9a9a"/><rect x="1.5" y="1" width="10.5" height="14" fill="#fff"/><path d="M12.5 3.5V15.5H1" stroke="#111" stroke-width="1.6" fill="none"/><path d="M9.5 0.5L12.5 3.5" stroke="#111" fill="none"/><path d="M1.5 0.5V15" stroke="#8a8a8a" fill="none"/><path d="M1.5 0.5H9.5" stroke="#8a8a8a" fill="none"/></svg>
<div class="t k" style="left:128.80px;top:988px;font-size:11.5px;color:#111;transform:scaleX(0.9524);transform-origin:0 0;">Duration</div>
<div class="t k" style="left:505.60px;top:988px;font-size:11.5px;color:#111;">00:22:09.511</div>
<div class="t k" style="left:745.40px;top:988px;font-size:11.5px;color:#111;">00:22:09.511</div>
<div class="t k" style="left:985.40px;top:865px;font-size:11.5px;color:#111;transform:scaleX(0.9445);transform-origin:0 0;">Audio properties</div>
<div class="t k" style="left:1378.30px;top:865px;font-size:11.5px;color:#111;transform:scaleX(0.9868);transform-origin:0 0;">Input file</div>
<div class="t k" style="left:1618.20px;top:865px;font-size:11.5px;color:#111;transform:scaleX(0.9710);transform-origin:0 0;">Output file</div>
<svg style="left:985px;top:882px" width="14" height="17" viewBox="0 0 14 17"><path d="M1.5 15.5V0.5H9.5L12.5 3.5" fill="#fff" stroke="#9a9a9a"/><rect x="1.5" y="1" width="10.5" height="14" fill="#fff"/><path d="M12.5 3.5V15.5H1" stroke="#111" stroke-width="1.6" fill="none"/><path d="M9.5 0.5L12.5 3.5" stroke="#111" fill="none"/><path d="M1.5 0.5V15" stroke="#8a8a8a" fill="none"/><path d="M1.5 0.5H9.5" stroke="#8a8a8a" fill="none"/></svg>
<div class="t k" style="left:1001.20px;top:886px;font-size:11.5px;color:#111;transform:scaleX(0.9350);transform-origin:0 0;">Frequency</div>
<div class="t k" style="left:1378.30px;top:886px;font-size:11.5px;color:#111;transform:scaleX(0.9161);transform-origin:0 0;">48000 Hz</div>
<div class="t k" style="left:1618.20px;top:886px;font-size:11.5px;color:#111;transform:scaleX(0.9182);transform-origin:0 0;">48000 Hz</div>
<svg style="left:985px;top:899px" width="14" height="17" viewBox="0 0 14 17"><path d="M1.5 15.5V0.5H9.5L12.5 3.5" fill="#fff" stroke="#9a9a9a"/><rect x="1.5" y="1" width="10.5" height="14" fill="#fff"/><path d="M12.5 3.5V15.5H1" stroke="#111" stroke-width="1.6" fill="none"/><path d="M9.5 0.5L12.5 3.5" stroke="#111" fill="none"/><path d="M1.5 0.5V15" stroke="#8a8a8a" fill="none"/><path d="M1.5 0.5H9.5" stroke="#8a8a8a" fill="none"/></svg>
<div class="t k" style="left:1001.20px;top:903px;font-size:11.5px;color:#111;transform:scaleX(0.9097);transform-origin:0 0;">Channels</div>
<div class="t k" style="left:1378.30px;top:903px;font-size:11.5px;color:#111;transform:scaleX(0.9385);transform-origin:0 0;">Stereo</div>
<div class="t k" style="left:1618.20px;top:903px;font-size:11.5px;color:#111;transform:scaleX(0.9385);transform-origin:0 0;">Stereo</div>
<svg style="left:985px;top:916px" width="14" height="17" viewBox="0 0 14 17"><path d="M1.5 15.5V0.5H9.5L12.5 3.5" fill="#fff" stroke="#9a9a9a"/><rect x="1.5" y="1" width="10.5" height="14" fill="#fff"/><path d="M12.5 3.5V15.5H1" stroke="#111" stroke-width="1.6" fill="none"/><path d="M9.5 0.5L12.5 3.5" stroke="#111" fill="none"/><path d="M1.5 0.5V15" stroke="#8a8a8a" fill="none"/><path d="M1.5 0.5H9.5" stroke="#8a8a8a" fill="none"/></svg>
<div class="t k" style="left:1001.20px;top:920px;font-size:11.5px;color:#111;transform:scaleX(0.9568);transform-origin:0 0;">Bitrate</div>
<div class="t k" style="left:1378.30px;top:920px;font-size:11.5px;color:#111;transform:scaleX(0.9233);transform-origin:0 0;">1536 kbps</div>
<div class="t k" style="left:1618.20px;top:920px;font-size:11.5px;color:#111;transform:scaleX(0.9191);transform-origin:0 0;">256 kbps</div>
<svg style="left:985px;top:933px" width="14" height="17" viewBox="0 0 14 17"><path d="M1.5 15.5V0.5H9.5L12.5 3.5" fill="#fff" stroke="#9a9a9a"/><rect x="1.5" y="1" width="10.5" height="14" fill="#fff"/><path d="M12.5 3.5V15.5H1" stroke="#111" stroke-width="1.6" fill="none"/><path d="M9.5 0.5L12.5 3.5" stroke="#111" fill="none"/><path d="M1.5 0.5V15" stroke="#8a8a8a" fill="none"/><path d="M1.5 0.5H9.5" stroke="#8a8a8a" fill="none"/></svg>
<div class="t k" style="left:1001.20px;top:937px;font-size:11.5px;color:#111;transform:scaleX(0.9085);transform-origin:0 0;">Codec</div>
<div class="t k" style="left:1378.30px;top:937px;font-size:11.5px;color:#111;transform:scaleX(0.9252);transform-origin:0 0;">PCM signed 16-bit little-endian</div>
<div class="t k" style="left:1618.20px;top:937px;font-size:11.5px;color:#111;transform:scaleX(0.9259);transform-origin:0 0;">AAC (Advanced Audio Coding)</div>
<svg style="left:985px;top:950px" width="14" height="17" viewBox="0 0 14 17"><path d="M1.5 15.5V0.5H9.5L12.5 3.5" fill="#fff" stroke="#9a9a9a"/><rect x="1.5" y="1" width="10.5" height="14" fill="#fff"/><path d="M12.5 3.5V15.5H1" stroke="#111" stroke-width="1.6" fill="none"/><path d="M9.5 0.5L12.5 3.5" stroke="#111" fill="none"/><path d="M1.5 0.5V15" stroke="#8a8a8a" fill="none"/><path d="M1.5 0.5H9.5" stroke="#8a8a8a" fill="none"/></svg>
<div class="t k" style="left:1001.20px;top:954px;font-size:11.5px;color:#111;transform:scaleX(0.9432);transform-origin:0 0;">Duration</div>
<div class="t k" style="left:1378.30px;top:954px;font-size:11.5px;color:#111;">00:22:09.511</div>
<div class="t k" style="left:1618.20px;top:954px;font-size:11.5px;color:#111;transform:scaleX(1.0076);transform-origin:0 0;">00:22:09.511</div>
<svg style="left:24px;top:7px" width="28" height="32" viewBox="0 0 28 32">
<path d="M2 4 L26 4 L23 30 L5 30 Z" fill="#dfe3e6" stroke="#b8bec4" stroke-width="0.8"/>
<path d="M2 4 L26 4 L25 8 L3 8Z" fill="#f4f6f8"/>
<path d="M6 8 L8 28 M22 8 L20 28" stroke="#c6ccd2" stroke-width="1"/>
<path d="M10 15 L13 11 L15 14 M18 16 L17 21 L13 20 M9 18 L11 22 L14 22" stroke="#2b7fd8" stroke-width="2.2" fill="none"/>
</svg>
<div class="t" style="left:8.30px;top:43.5px;font-size:12px;color:#f4f4f4;transform:scaleX(0.9423);transform-origin:0 0;text-shadow:0 0 2px rgba(0,0,0,0.6),1px 1px 1px rgba(0,0,0,0.5);">Recycle Bin</div>
<svg style="left:21px;top:90px" width="34" height="34" viewBox="0 0 34 34">
<path d="M17 8 Q24 -1 30 4 Q34 9 27 14 Q33 24 26 29 Q20 32 16 26 Q6 31 3 24 Q1 18 9 16 Q4 8 10 5 Q14 3 17 8Z" fill="#ff7800"/>
<circle cx="19" cy="16" r="4.2" fill="none" stroke="#fff" stroke-width="2.2"/><path d="M23 13V20" stroke="#fff" stroke-width="2"/>
</svg>
<svg style="left:22px;top:110px" width="11" height="11"><rect x="0" y="0" width="11" height="11" fill="#e8e8e8"/><path d="M3 9 Q3 4 7.5 4" stroke="#2a5aa8" stroke-width="2" fill="none"/><path d="M6 1.5L9.5 4L6 6.5Z" fill="#2a5aa8"/></svg>
<div class="t" style="left:11.50px;top:128px;font-size:12px;color:#f4f4f4;transform:scaleX(0.9256);transform-origin:0 0;text-shadow:0 0 2px rgba(0,0,0,0.6),1px 1px 1px rgba(0,0,0,0.5);">Avast Free</div>
<div class="t" style="left:14.00px;top:142.5px;font-size:12px;color:#f4f4f4;transform:scaleX(1.0214);transform-origin:0 0;text-shadow:0 0 2px rgba(0,0,0,0.6),1px 1px 1px rgba(0,0,0,0.5);">Antivirus</div>
<svg style="left:22px;top:174px" width="32" height="32" viewBox="0 0 32 32">
<rect width="32" height="32" fill="#0a46e6"/>
<path d="M4 6 L14 9 M4 9 L14 12 M4 12 L12 14" stroke="#fff" stroke-width="1.2"/>
<rect x="19" y="4" width="9" height="4" fill="#fff"/><rect x="17" y="9" width="13" height="5" fill="#fff"/><rect x="19" y="15" width="9" height="3" fill="#fff"/>
<path d="M23 19 L25 24 L30 24 L26 27 L28 32 L23 29 L18 32 L20 27 L16 24 L21 24Z" fill="#fff"/>
</svg>
<svg style="left:22px;top:195px" width="11" height="11"><rect x="0" y="0" width="11" height="11" fill="#e8e8e8"/><path d="M3 9 Q3 4 7.5 4" stroke="#2a5aa8" stroke-width="2" fill="none"/><path d="M6 1.5L9.5 4L6 6.5Z" fill="#2a5aa8"/></svg>
<div class="t" style="left:18.70px;top:212px;font-size:12px;color:#f4f4f4;transform:scaleX(0.9733);transform-origin:0 0;text-shadow:0 0 2px rgba(0,0,0,0.6),1px 1px 1px rgba(0,0,0,0.5);">Brother</div>
<div class="t" style="left:18.50px;top:226.5px;font-size:12px;color:#f4f4f4;text-shadow:0 0 2px rgba(0,0,0,0.6),1px 1px 1px rgba(0,0,0,0.5);">Utilities</div>
<svg style="left:22px;top:259px" width="32" height="32" viewBox="0 0 32 32">
<rect width="32" height="32" rx="6" fill="#12b4e4"/>
<path d="M20 6 Q12 4 12 11 Q12 16 17 17 Q22 19 20 25 Q17 29 12 27" stroke="#fff" stroke-width="3.2" fill="none"/>
<path d="M17 17 Q24 20 20 26" stroke="#7fd8e8" stroke-width="3" fill="none"/>
</svg>
<svg style="left:22px;top:280px" width="11" height="11"><rect x="0" y="0" width="11" height="11" fill="#e8e8e8"/><path d="M3 9 Q3 4 7.5 4" stroke="#2a5aa8" stroke-width="2" fill="none"/><path d="M6 1.5L9.5 4L6 6.5Z" fill="#2a5aa8"/></svg>
<div class="t" style="left:12.40px;top:296px;font-size:12px;color:#f4f4f4;transform:scaleX(0.9909);transform-origin:0 0;text-shadow:0 0 2px rgba(0,0,0,0.6),1px 1px 1px rgba(0,0,0,0.5);">Connect2</div>
<svg style="left:26px;top:345px" width="24" height="30" viewBox="0 0 24 30">
<path d="M2 2 L10 0 L22 3 L22 28 L2 30Z" fill="#f2cf6a"/>
<path d="M5 4 L20 6 L20 27 L5 28Z" fill="#fafafa"/>
<path d="M6 22 Q12 10 19 18 L19 27 L6 27Z" fill="#6cc040"/>
<path d="M8 8 L12 26 M17 8 L13 26" stroke="#e0a020" stroke-width="1.2"/>
</svg>
<div class="t" style="left:13.30px;top:380px;font-size:12px;color:#f4f4f4;transform:scaleX(0.9738);transform-origin:0 0;text-shadow:0 0 2px rgba(0,0,0,0.6),1px 1px 1px rgba(0,0,0,0.5);">TestMails</div>
<svg style="left:21px;top:429px" width="34" height="34" viewBox="0 0 34 34">
<circle cx="15" cy="16" r="14" fill="#1f6fc0"/><circle cx="15" cy="16" r="9" fill="#d8eef8"/><circle cx="15" cy="16" r="4" fill="#6ab830"/>
<path d="M4 5L8 9M26 5L22 9" stroke="#fff" stroke-width="2"/>
<path d="M22 20 L28 18 L33 20 L33 26 Q30 32 27 33 Q23 31 22 26Z" fill="#f4b800"/><path d="M27 18 L33 20 L33 26 L27 26Z" fill="#2a62c8"/><path d="M22 26 L27 26 L27 33 Q23 31 22 26Z" fill="#2a62c8"/>
</svg>
<div class="t" style="left:4.00px;top:463px;font-size:12px;color:#f4f4f4;transform:scaleX(0.9546);transform-origin:0 0;text-shadow:0 0 2px rgba(0,0,0,0.6),1px 1px 1px rgba(0,0,0,0.5);">adwcleaner...</div>
<svg style="left:22px;top:510px" width="32" height="32" viewBox="0 0 32 32">
<path d="M0 0 H28 L32 4 V32 H0Z" fill="#2238a8"/><rect x="7" y="1" width="16" height="8" fill="#e8e8f8"/><rect x="17" y="2" width="4" height="6" fill="#2238a8"/>
<rect x="4" y="14" width="26" height="16" fill="#f4f4f4"/><path d="M10 19H28M10 25H28" stroke="#d02020" stroke-width="1.2"/><text x="14" y="24.5" font-size="6" font-family="Liberation Sans" fill="#222">-64-</text>
</svg>
<svg style="left:22px;top:531px" width="11" height="11"><rect x="0" y="0" width="11" height="11" fill="#e8e8e8"/><path d="M3 9 Q3 4 7.5 4" stroke="#2a5aa8" stroke-width="2" fill="none"/><path d="M6 1.5L9.5 4L6 6.5Z" fill="#2a5aa8"/></svg>
<div class="t" style="left:24.00px;top:547.5px;font-size:12px;color:#f4f4f4;transform:scaleX(1.0652);transform-origin:0 0;text-shadow:0 0 2px rgba(0,0,0,0.6),1px 1px 1px rgba(0,0,0,0.5);">Total</div>
<div class="t" style="left:4.00px;top:562.5px;font-size:12px;color:#f4f4f4;transform:scaleX(1.0252);transform-origin:0 0;text-shadow:0 0 2px rgba(0,0,0,0.6),1px 1px 1px rgba(0,0,0,0.5);">Command...</div>
<svg style="left:25px;top:598px" width="26" height="30" viewBox="0 0 26 30">
<path d="M2 2 L10 0 L24 3 L24 28 L2 30Z" fill="#f2cf6a"/>
<rect x="6" y="5" width="14" height="22" fill="#fff"/>
<path d="M8 8 Q16 6 18 14 Q20 24 10 26" stroke="#c020c0" stroke-width="3" fill="none"/><path d="M12 10 Q20 14 14 24" stroke="#6020a0" stroke-width="2.2" fill="none"/>
<rect x="9" y="12" width="5" height="8" fill="#222"/>
</svg>
<svg style="left:25px;top:617px" width="11" height="11"><rect x="0" y="0" width="11" height="11" fill="#e8e8e8"/><path d="M3 9 Q3 4 7.5 4" stroke="#2a5aa8" stroke-width="2" fill="none"/><path d="M6 1.5L9.5 4L6 6.5Z" fill="#2a5aa8"/></svg>
<div class="t" style="left:26.50px;top:632px;font-size:12px;color:#f4f4f4;transform:scaleX(0.8654);transform-origin:0 0;text-shadow:0 0 2px rgba(0,0,0,0.6),1px 1px 1px rgba(0,0,0,0.5);">www</div>
<div class="t" style="left:95.50px;top:1020px;font-size:12px;color:#dcdcdc;transform:scaleX(0.9712);transform-origin:0 0;">Conversion is in progress</div>
<div class="a" style="left:1120px;top:1016px;width:1px;height:17px;background:#2a2a2a;"></div>
<div class="a" style="left:1121px;top:1016px;width:2px;height:17px;background:#e8e8e8;"></div>
<div class="a" style="left:1176px;top:1016px;width:1px;height:17px;background:#2a2a2a;"></div>
<div class="a" style="left:1177px;top:1016px;width:2px;height:17px;background:#e8e8e8;"></div>
<div class="a" style="left:1249px;top:1016px;width:1px;height:17px;background:#2a2a2a;"></div>
<div class="a" style="left:1250px;top:1016px;width:2px;height:17px;background:#e8e8e8;"></div>
<div class="a" style="left:1336px;top:1016px;width:1px;height:17px;background:#2a2a2a;"></div>
<div class="a" style="left:1337px;top:1016px;width:2px;height:17px;background:#e8e8e8;"></div>
<div class="a" style="left:1409px;top:1016px;width:1px;height:17px;background:#2a2a2a;"></div>
<div class="a" style="left:1410px;top:1016px;width:2px;height:17px;background:#e8e8e8;"></div>
<div class="a" style="left:1492px;top:1016px;width:1px;height:17px;background:#2a2a2a;"></div>
<div class="a" style="left:1493px;top:1016px;width:2px;height:17px;background:#e8e8e8;"></div>
<div class="a" style="left:1565px;top:1016px;width:1px;height:17px;background:#2a2a2a;"></div>
<div class="a" style="left:1566px;top:1016px;width:2px;height:17px;background:#e8e8e8;"></div>
<div class="t" style="left:1576.00px;top:1020px;font-size:12px;color:#6c6c6c;transform:scaleX(0.9735);transform-origin:0 0;">Zoom To Screen</div>
<div class="t" style="left:1681.70px;top:1020px;font-size:12px;color:#6c6c6c;transform:scaleX(0.9285);transform-origin:0 0;">38%</div>
<div class="a" style="left:1730px;top:1025px;width:100px;height:1px;background:#5a5a5a;"></div>
<div class="a" style="left:1730px;top:1026px;width:100px;height:1px;background:#2a2a2a;"></div>
<div class="a" style="left:1780px;top:1021px;width:1px;height:9px;background:#5e5e5e;"></div>
<svg style="left:1713px;top:1015px" width="160" height="22" viewBox="1713 1015 160 22">
<defs><radialGradient id="zb" cx="40%" cy="35%" r="70%"><stop offset="0" stop-color="#b8b8b8"/><stop offset="1" stop-color="#6a6a6a"/></radialGradient></defs>
<circle cx="1722.7" cy="1025" r="7" fill="url(#zb)" stroke="#2e2e2e"/><rect x="1718.5" y="1024" width="8.4" height="2.2" fill="#2a2a2a"/>
<circle cx="1836.7" cy="1025" r="7" fill="url(#zb)" stroke="#2e2e2e"/><rect x="1832.5" y="1024" width="8.4" height="2.2" fill="#2a2a2a"/><rect x="1835.6" y="1020.8" width="2.2" height="8.4" fill="#2a2a2a"/>
<g fill="#7a7a7a"><rect x="1860" y="1023" width="2" height="2"/><rect x="1857" y="1026" width="2" height="2"/><rect x="1860" y="1026" width="2" height="2"/><rect x="1854" y="1029" width="2" height="2"/><rect x="1857" y="1029" width="2" height="2"/><rect x="1860" y="1029" width="2" height="2"/></g>
</svg>
<div class="a" style="left:1176px;top:1040px;width:48px;height:40px;background:#3b403f;"></div>
<div class="a" style="left:151px;top:1078px;width:40px;height:2px;background:#99cdf0;"></div>
<div class="a" style="left:592px;top:1078px;width:40px;height:2px;background:#99cdf0;"></div>
<div class="a" style="left:1176px;top:1078px;width:48px;height:2px;background:#99cdf0;"></div>
<svg style="left:0;top:1040px" width="1920" height="40" viewBox="0 1040 1920 40">
<!-- windows -->
<g fill="#fff"><polygon points="16,1053.5 23,1052.5 23,1059.3 16,1059.3"/><polygon points="24.3,1052.3 32.3,1051.3 32.3,1059.3 24.3,1059.3"/><polygon points="16,1060.5 23,1060.5 23,1067.3 16,1066.5"/><polygon points="24.3,1060.5 32.3,1060.5 32.3,1068.3 24.3,1067.5"/></g>
<!-- search -->
<circle cx="74" cy="1058" r="5.6" fill="none" stroke="#fff" stroke-width="1.5"/><path d="M70 1062 L64 1068" stroke="#fff" stroke-width="1.6"/>
<!-- task view -->
<g fill="none" stroke="#fff" stroke-width="1.3"><rect x="113" y="1055" width="10" height="9"/><path d="M112 1052.5H124M112 1066.5H124M127 1052V1054M127 1057V1068"/></g><rect x="126" y="1054" width="2.2" height="3" fill="#fff"/>
<!-- explorer -->
<path d="M160 1052 H168 L170 1054 H182 V1068 H160Z" fill="#f6d66e"/><rect x="160" y="1055" width="22" height="13" fill="#fbe08c"/><path d="M165 1068 V1062 H177 V1068 H174 V1065 H168 V1068Z" fill="#2a8ad8"/>
<!-- pgadmin elephant -->
<path d="M210 1050 Q220 1046 230 1050 Q233 1058 228 1064 L224 1066 L222 1072 Q219 1073 219 1068 L216 1064 Q209 1060 210 1050Z" fill="#336791" stroke="#c8d8e8" stroke-width="0.6"/>
<!-- yellow blobs -->
<ellipse cx="268" cy="1063" rx="10" ry="7" fill="#e8b020"/><path d="M259 1060 Q258 1050 266 1049 Q265 1056 263 1060Z" fill="#f0c030"/><path d="M272 1058 Q276 1050 280 1053 Q280 1060 276 1060Z" fill="#f0c030"/><ellipse cx="266" cy="1061" rx="4" ry="2" fill="#fbe6a0"/>
<!-- gimp -->
<path d="M310 1058 Q318 1052 327 1052 Q326 1058 322 1062 L328 1068 L325 1069 L318 1063 Q311 1064 310 1058Z" fill="#7a7060"/><circle cx="312" cy="1059" r="1.6" fill="#fff"/><circle cx="315" cy="1058" r="1.6" fill="#fff"/>
<!-- white diamond -->
<path d="M366 1048 L378 1060 L366 1072 L354 1060Z" fill="#e8e8e8"/><path d="M354 1060 L366 1056 L378 1060" stroke="#b0b0b0" fill="none"/><circle cx="371" cy="1066" r="5" fill="#808080"/><circle cx="370" cy="1065" r="2" fill="#c8c8c8"/>
<!-- notepad++ -->
<rect x="405" y="1049" width="18" height="23" fill="#f0f0f0"/><rect x="405" y="1060" width="18" height="12" fill="#7cc830"/><path d="M410 1053 V1064 M413 1056 H419" stroke="#333" stroke-width="1.2"/><path d="M420 1066 L427 1048" stroke="#e8a020" stroke-width="2.2"/>
<!-- intellij -->
<rect x="454" y="1049" width="22" height="21" fill="#f04070"/><path d="M454 1049 H476 V1070" fill="none" stroke="#3080f0" stroke-width="2"/><rect x="457" y="1052" width="16" height="16" fill="#000"/><text x="459" y="1060.5" font-size="7.5" font-weight="700" font-family="Liberation Sans" fill="#fff">IJ</text><rect x="459" y="1064" width="6" height="1.5" fill="#fff"/>
<!-- pycharm -->
<path d="M502 1052 L512 1048 L524 1052 L526 1066 L516 1072 L503 1069Z" fill="#21d789"/><path d="M516 1050 L526 1056 L524 1070 L510 1072Z" fill="#fcf84a"/><rect x="506" y="1052" width="16" height="16" fill="#000"/><text x="507.5" y="1060" font-size="7" font-weight="700" font-family="Liberation Sans" fill="#fff">PC</text><rect x="508" y="1064" width="6" height="1.5" fill="#fff"/>
<!-- phpstorm -->
<path d="M551 1050 L562 1048 L574 1052 L575 1066 L565 1072 L552 1070Z" fill="#8a4cf0"/><path d="M562 1048 L575 1054 L572 1070 Z" fill="#d04ca8"/><rect x="555" y="1052" width="16" height="16" fill="#000"/><text x="556" y="1060" font-size="7" font-weight="700" font-family="Liberation Sans" fill="#fff">PS</text><rect x="557" y="1064" width="6" height="1.5" fill="#fff"/>
<!-- chrome -->
<circle cx="612" cy="1060" r="11.3" fill="#db4437"/><path d="M612 1060 L601.3 1063.5 A11.3 11.3 0 0 0 617 1070.2Z" fill="#0f9d58"/><path d="M612 1060 L617 1070.2 A11.3 11.3 0 0 0 622.5 1055.5 L612 1055.5Z" fill="#ffcd40"/><path d="M612 1060 L601.3 1063.5 A11.3 11.3 0 0 1 603 1053.5Z" fill="#0f9d58"/><circle cx="612" cy="1060" r="5.2" fill="#fff"/><circle cx="612" cy="1060" r="4" fill="#4285f4"/>
<!-- opera -->
<ellipse cx="661" cy="1060" rx="11.4" ry="11.8" fill="#e01020"/><ellipse cx="661" cy="1060" rx="4.6" ry="8.4" fill="#1a201e"/>
<!-- sourcetree/git -->
<path d="M710 1047.5 L716.5 1054 L710 1060.5 L703.5 1054Z" fill="#f28a8a"/>
<path d="M703 1054.5 L709.5 1061 L703 1067.5 L696.5 1061Z" fill="#7ab0f8"/>
<path d="M717 1054.5 L723.5 1061 L717 1067.5 L710.5 1061Z" fill="#62c45a"/>
<path d="M710 1061.5 L716.5 1068 L710 1074.5 L703.5 1068Z" fill="#f4e07a"/>
<path d="M708 1050 L710 1056 V1068 M710 1058 Q716 1060 715 1064" stroke="#1a1a1a" stroke-width="1.8" fill="none"/><circle cx="710" cy="1068" r="1.8" fill="#1a1a1a"/><circle cx="715" cy="1063" r="1.8" fill="#1a1a1a"/>
<!-- lambda -->
<rect x="747.5" y="1048.5" width="23" height="23" fill="#8cbc20" stroke="#607a20" stroke-width="1"/><path d="M749 1052H769M749 1055H769M749 1058H769M749 1061H769M749 1064H769M749 1067H769" stroke="#a6d040" stroke-width="1.2"/><text x="752" y="1068" font-size="19" font-family="Liberation Serif" fill="#3e4e18">λ</text>
<!-- keepass -->
<circle cx="807" cy="1059.5" r="10.5" fill="#7090e0"/><circle cx="807" cy="1059.5" r="8.5" fill="#d8e4f8"/><path d="M803 1058 V1055 Q807 1050 811 1055 V1058" stroke="#223" stroke-width="1.8" fill="none"/><rect x="801" y="1058" width="12" height="7" fill="#222a3a"/>
<!-- wamp -->
<rect x="846" y="1049" width="22" height="22" rx="6" fill="none" stroke="#e8208a" stroke-width="3"/><text x="850" y="1065" font-size="12" font-weight="700" font-family="Liberation Sans" fill="#e8208a">W</text>
<!-- slack -->
<rect x="894" y="1048" width="24" height="24" rx="4" fill="#4a154b"/><g stroke-width="3" stroke-linecap="round"><path d="M902 1053 V1059" stroke="#36c5f0"/><path d="M898 1063 H904" stroke="#e01e5a"/><path d="M910 1061 V1067" stroke="#ecb22e"/><path d="M908 1057 H914" stroke="#2eb67d"/></g>
<!-- elastic -->
<path d="M945 1054 Q950 1046 958 1048 Q964 1050 966 1054Z" fill="#f0c020"/><rect x="945" y="1055" width="21" height="9" fill="#111"/><rect x="956" y="1056" width="10" height="7" rx="3" fill="#20a8e0"/><path d="M945 1065 H966 Q962 1073 954 1072 Q947 1070 945 1065Z" fill="#20b8b0"/>
<!-- rocket -->
<path d="M1004 1048 Q1011 1056 1010 1066 L998 1066 Q997 1056 1004 1048Z" fill="#4cb840"/><circle cx="1004" cy="1058" r="2.4" fill="#d0f0c0"/><path d="M998 1062 Q994 1066 996 1070 M1010 1062 Q1014 1066 1012 1070" stroke="#4cb840" stroke-width="1.4" fill="none"/>
<!-- mongodb -->
<circle cx="1053" cy="1060" r="11.5" fill="#fff"/><path d="M1053 1050 Q1059 1058 1054 1068 L1053 1071 L1052 1068 Q1047 1058 1053 1050Z" fill="#13aa52"/>
<!-- postman -->
<circle cx="1102" cy="1060" r="12" fill="#f26b3a"/><path d="M1094 1068 L1108 1054" stroke="#fff" stroke-width="1.6"/><circle cx="1108" cy="1054" r="2" fill="none" stroke="#fff" stroke-width="1.2"/>
<!-- globe -->
<circle cx="1150" cy="1059" r="10.5" fill="#3a78c8"/><path d="M1143 1052 Q1150 1056 1148 1062 Q1144 1066 1142 1062Z" fill="#e8f0f8"/><path d="M1152 1050 Q1158 1054 1156 1058" stroke="#d0e8f8" stroke-width="2" fill="none"/><rect x="1151" y="1064" width="9" height="7" fill="#f0f0f0"/>
<!-- video editor -->
<rect x="1188.5" y="1048.5" width="18" height="23" fill="#0d3e48" stroke="#1ab2b8" stroke-width="1.2"/><path d="M1190 1051 L1203 1060 L1190 1069Z" fill="#2ad0d0"/><rect x="1201" y="1051" width="4" height="5" fill="none" stroke="#1ab2b8" stroke-width="0.8"/><rect x="1201" y="1064" width="4" height="5" fill="none" stroke="#1ab2b8" stroke-width="0.8"/>
</svg>
<svg style="left:1630px;top:1040px" width="290" height="40" viewBox="1630 1040 290 40">
<g fill="none" stroke="#fff" stroke-width="1.2">
<circle cx="1643" cy="1058" r="2.6"/><path d="M1638 1068 Q1638 1062 1643 1062 Q1648 1062 1648 1068"/><circle cx="1649" cy="1054" r="2.6"/><path d="M1647.5 1059 Q1654 1058 1654.5 1064"/>
<path d="M1677 1063 L1682 1057.5 L1687 1063"/>
<rect x="1700" y="1056" width="13" height="8"/><path d="M1713 1058.5 V1061.5"/>
<path d="M1725 1066 A12 12 0 0 1 1737 1054 M1728 1066 A9 9 0 0 1 1737 1057 M1731 1066 A6 6 0 0 1 1737 1060"/>
<path d="M1747 1057 H1750 L1754 1053 V1067 L1750 1063 H1747Z"/><path d="M1757 1057 Q1759 1060 1757 1063 M1760 1055 Q1763 1060 1760 1065"/>
</g>
<rect x="1702" y="1058" width="4" height="4" fill="#fff"/><path d="M1697 1054 H1702" stroke="#fff" stroke-width="1.2"/>
<path d="M1879 1050 H1896 V1062 H1884 L1881 1066 V1062 H1879Z" fill="#fff"/><path d="M1882 1053.5 H1893 M1882 1056.5 H1893 M1882 1059.5 H1890" stroke="#1a201e" stroke-width="1"/>
<circle cx="1893.5" cy="1067" r="7.8" fill="#2a2f2e" stroke="#8a8a8a" stroke-width="0.9"/>
<text x="1889.9" y="1071.6" font-size="12" font-weight="400" font-family="Liberation Sans" fill="#fff">2</text>
</svg>
<div class="t" style="left:1772.70px;top:1046px;font-size:12px;color:#ffffff;transform:scaleX(0.8576);transform-origin:0 0;">ENG</div>
<div class="t" style="left:1777.00px;top:1063px;font-size:12px;color:#ffffff;transform:scaleX(0.8121);transform-origin:0 0;">SK</div>
<div class="t" style="left:1821.70px;top:1046px;font-size:12px;color:#ffffff;transform:scaleX(0.8658);transform-origin:0 0;">12:53</div>
<div class="t" style="left:1808.30px;top:1063px;font-size:12px;color:#ffffff;transform:scaleX(0.9519);transform-origin:0 0;">24-Feb-19</div>
</body></html>
